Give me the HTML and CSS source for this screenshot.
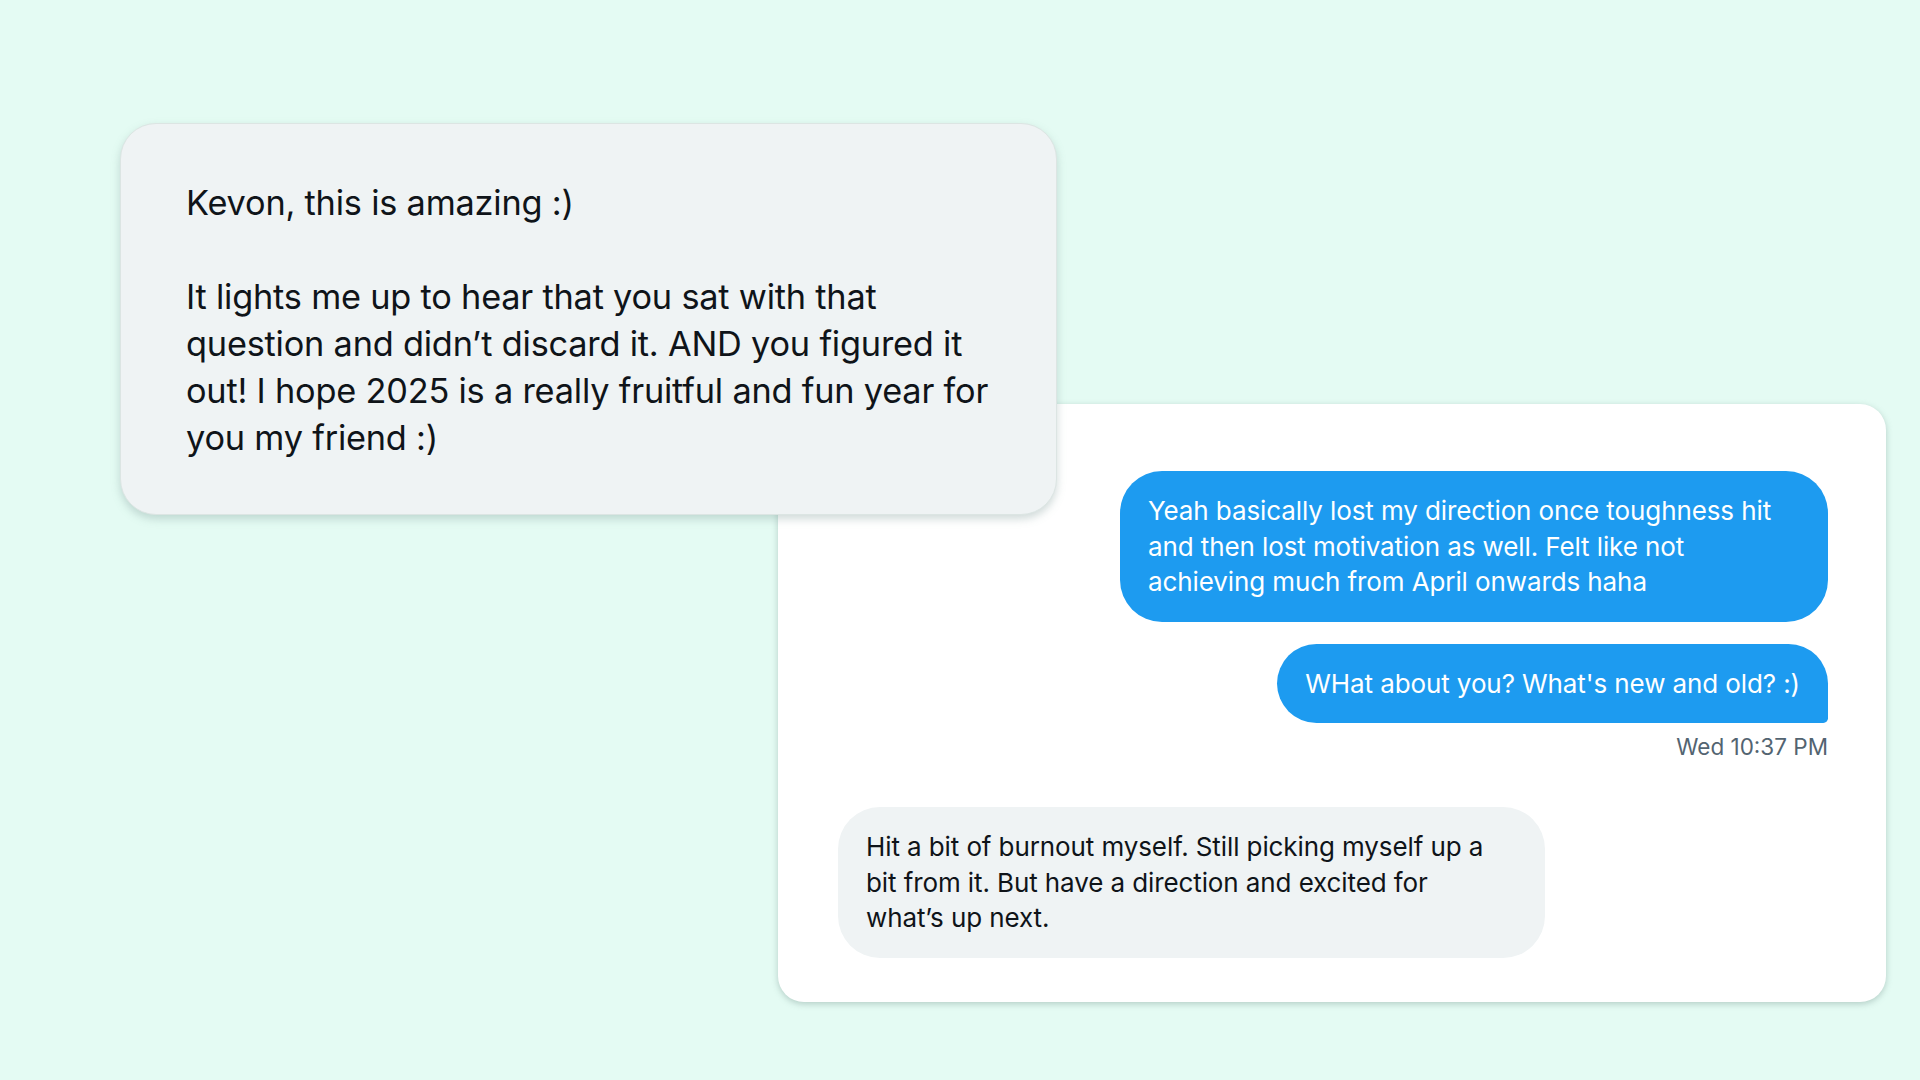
FILE: index.html
```html
<!DOCTYPE html>
<html lang="en">
<head>
<meta charset="utf-8">
<title>Messages</title>
<link rel="stylesheet" href="styles.css">
</head>
<body>
<main class="canvas">
  <section class="card card-reply">
    <p class="reply-line">Kevon, this is amazing :)</p>
    <p class="reply-line">It lights me up to hear that you sat with that question and didn’t discard it. AND you figured it out! I hope 2025 is a really fruitful and fun year for you my friend :)</p>
  </section>
  <section class="card card-thread">
    <div class="group group-sent">
      <div class="bubble bubble-sent">Yeah basically lost my direction once toughness hit and then lost motivation as well. Felt like not achieving much from April onwards haha</div>
      <div class="bubble bubble-sent bubble-last">WHat about you? What's new and old? :)</div>
      <div class="stamp">Wed 10:37 PM</div>
    </div>
    <div class="group group-received">
      <div class="bubble bubble-received">Hit a bit of burnout myself. Still picking myself up a bit from it. But have a direction and excited for what’s up next.</div>
    </div>
  </section>
</main>
</body>
</html>
```
FILE: styles.css
```css
html, body {
  margin: 0;
  padding: 0;
}
body {
  background: #e4fbf3;
  width: 1920px;
  height: 1080px;
  overflow: hidden;
  font-family: Inter, "Noto Sans", sans-serif;
  color: #0f1419;
}
.canvas {
  position: relative;
  width: 1920px;
  height: 1080px;
}
.card {
  position: absolute;
  box-sizing: border-box;
}
.card-reply {
  z-index: 2;
  left: 120px;
  top: 123px;
  width: 937px;
  height: 392px;
  background: #eff3f4;
  border-radius: 36px;
  border: 1px solid #dce5e3;
  box-shadow: 0 4px 8px rgba(120, 150, 145, 0.35);
  padding: 55px 50px 0 65px;
}
.reply-line {
  margin: 0 0 47px 0;
  font-size: 34.3px;
  line-height: 47px;
  letter-spacing: -0.2px;
}
.card-thread {
  z-index: 1;
  left: 778px;
  top: 404px;
  width: 1108px;
  height: 598px;
  background: #ffffff;
  border-radius: 26px;
  box-shadow: 0 2px 6px rgba(120, 150, 145, 0.45);
  padding: 67px 58px 0 60px;
  display: flex;
  flex-direction: column;
}
.group {
  display: flex;
  flex-direction: column;
}
.group-sent {
  align-items: flex-end;
  gap: 22px;
}
.group-received {
  align-items: flex-start;
  margin-top: 46px;
}
.bubble {
  box-sizing: border-box;
  font-size: 26px;
  line-height: 35.5px;
  padding: 22px 28px;
  border-radius: 42px;
  letter-spacing: -0.1px;
}
.bubble-sent {
  background: #1d9bf0;
  color: #ffffff;
  width: 708px;
}
.bubble-last {
  width: auto;
  border-bottom-right-radius: 5px;
}
.bubble-received {
  background: #eff3f4;
  color: #0f1419;
  width: 707px;
  padding-right: 36px;
}
.stamp {
  margin-top: -12px;
  font-size: 22.5px;
  line-height: 28px;
  color: #536471;
}
```
